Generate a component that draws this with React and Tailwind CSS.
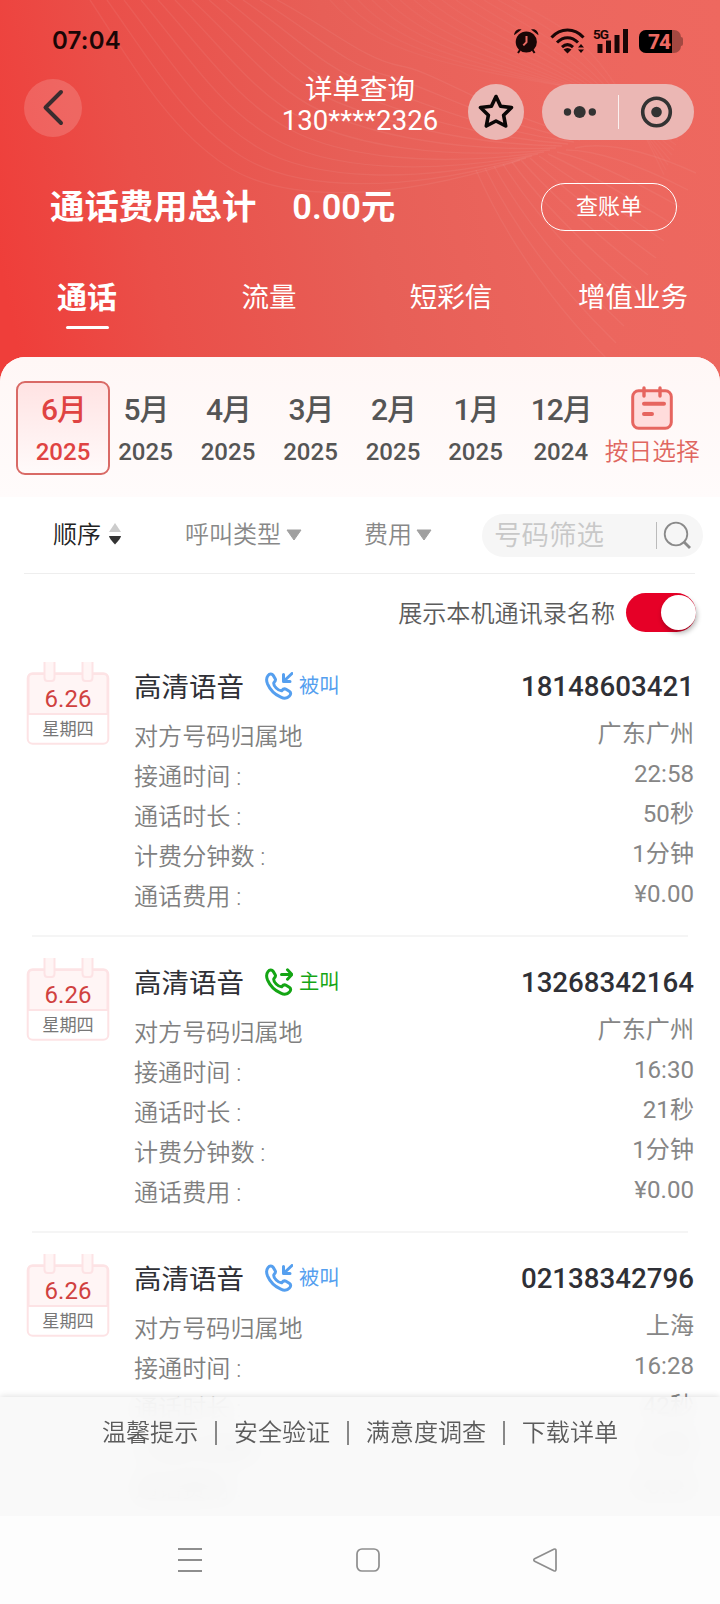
import { useState } from 'react';

const MONTHS = [
  { month: '6月', year: '2025' },
  { month: '5月', year: '2025' },
  { month: '4月', year: '2025' },
  { month: '3月', year: '2025' },
  { month: '2月', year: '2025' },
  { month: '1月', year: '2025' },
  { month: '12月', year: '2024' },
];

const TABS = ['通话', '流量', '短彩信', '增值业务'];

const RECORDS = [
  { id: 1, incoming: true, number: '18148603421', place: '广东广州', time: '22:58', duration: '50秒', minutes: '1分钟', fee: '¥0.00' },
  { id: 2, incoming: false, number: '13268342164', place: '广东广州', time: '16:30', duration: '21秒', minutes: '1分钟', fee: '¥0.00' },
  { id: 3, incoming: true, number: '02138342796', place: '上海', time: '16:28', duration: '42秒', minutes: '1分钟', fee: '¥0.00' },
];

const LINKS = ['温馨提示', '安全验证', '满意度调查', '下载详单'];

function Waves() {
  const range = (n) => Array.from({ length: n }, (_, i) => i);
  return (
    <svg className="absolute inset-0 h-full w-full pointer-events-none" viewBox="0 0 720 382" fill="none" stroke="#fff" strokeWidth="1.4">
      <g strokeOpacity="0.06">
        {range(12).map((i) => (
          <path
            key={i}
            d={`M${90 + i * 17} 0 C${130 + i * 18} ${60 - i * 3} ${165 + i * 18} ${125 - i * 6} ${225 + i * 16} ${165 - i * 9} S${400 + i * 8} ${200 - i * 8} ${520 + i * 6} ${160 - i * 2}`}
          />
        ))}
      </g>
      <g strokeOpacity="0.035">
        {range(14).map((i) => (
          <path key={i} d={`M${330 + i * 14} 0 C${390 + i * 14} ${70 - i * 3} ${500 + i * 8} ${70 - i * 2} ${690 - i * 2} ${110 + i * 5}`} />
        ))}
      </g>
      <g strokeOpacity="0.055">
        {range(12).map((i) => (
          <path key={i} d={`M${476 + i * 9} ${170 - i * 2} Q${520 + i * 9} ${270 - i * 12} ${608 + i * 8} ${360 - i * 17}`} />
        ))}
      </g>
    </svg>
  );
}

function StatusBar() {
  return (
    <div className="flex h-[74px] items-start justify-between pl-[52px] pr-[37px] pt-[27px] text-[#1a0606]">
      <span className="font-['Inter'] text-[24px] leading-[28px] font-semibold tracking-[0.2px]">07:04</span>
      <div className="flex items-start">
        <svg className="h-[28px] w-[26px]" viewBox="0 0 26 28" fill="currentColor">
          <circle cx="13.3" cy="15" r="10.6" />
          <path d="M1.2 8.2C1 4 5 .9 8.6 2.6z M25.4 8.2C25.6 4 21.6 .9 18 2.6z" />
          <path d="M7 23l-2 3M19.6 23l2 3" stroke="currentColor" strokeWidth="2" />
          <path d="M13.5 9v6.2l-3.2 3.2" stroke="#ec6a62" strokeWidth="2" fill="none" />
        </svg>
        <svg className="ml-[11px] h-[28px] w-[36px]" viewBox="0 0 36 28" fill="none" stroke="currentColor" strokeWidth="3">
          <path d="M1.5 10.5C10.5 .5 24.5 .5 33.5 10.5" />
          <path d="M7 15.5C13.5 9 21.5 9 28 15.5" />
          <path d="M12 20.2C15.5 17 19.5 17 23 20.2" />
          <path d="M13.5 22.5Q17.5 19.5 21.5 22.5L17.5 26.5z" fill="currentColor" stroke="none" />
          <path d="M28 20.5L31 17L34 20.5z M28 22.5H34L31 26z" fill="currentColor" stroke="none" />
        </svg>
        <svg className="ml-[7px] h-[28px] w-[36px]" viewBox="0 0 36 28" fill="currentColor">
          <text x="0" y="11.5" fontFamily="Roboto" fontWeight="700" fontSize="13.5" textLength="16">5G</text>
          <rect x="4.5" y="17" width="5" height="9" />
          <rect x="13" y="13.5" width="5" height="12.5" />
          <rect x="21.5" y="8" width="5" height="18" />
          <rect x="30" y="2" width="5" height="24" />
        </svg>
        <div className="relative mt-[3px] ml-[10px] flex items-center">
          <div className="flex h-[23px] w-[42px] overflow-hidden rounded-[7px] bg-[#a34841]">
            <div className="h-full w-[33px] bg-black" />
          </div>
          <div className="h-[9px] w-[2px] rounded-r bg-[#a34841]" />
          <span className="absolute left-[9px] top-0 font-['Roboto'] text-[21px] leading-[24px] font-extrabold tracking-[-1px] text-[#ec6a62]">74</span>
        </div>
      </div>
    </div>
  );
}

function NavBar() {
  return (
    <div className="grid h-[68px] grid-cols-[1fr_auto_1fr] items-start">
      <button className="mt-[5px] ml-6 flex h-[58px] w-[58px] items-center justify-center rounded-full bg-white/16">
        <svg className="h-[58px] w-[58px]" viewBox="0 0 58 58" fill="none" stroke="#3a2d2f" strokeWidth="4" strokeLinecap="round" strokeLinejoin="round">
          <path d="M37 13L21.5 28.5L37 44" />
        </svg>
      </button>
      <div className="flex w-[156px] flex-col items-center pt-[1px] text-white">
        <span className="h-[30px] text-[27.5px] leading-[29px] whitespace-nowrap">详单查询</span>
        <span className="text-[27.5px] leading-[32px] tracking-[0.1px]">130****2326</span>
      </div>
      <div className="mt-[10px] mr-[26px] flex justify-end gap-[18px]">
        <button className="flex h-14 w-14 items-center justify-center rounded-full bg-[#ebb7b4]">
          <svg className="h-14 w-14" viewBox="0 0 56 56" fill="none" stroke="#0a0606" strokeWidth="3.6" strokeLinejoin="round">
            <path d="M28 12.5L32.6 22.2L43.5 23.5L35.6 31.2L37.7 42L28 37L18.3 42L20.4 31.2L12.5 23.5L23.4 22.2Z" />
          </svg>
        </button>
        <div className="flex h-14 w-[152px] items-center rounded-full bg-[#ebb7b4]">
          <svg className="h-14 w-[76px]" viewBox="0 0 76 56" fill="#333">
            <circle cx="25.5" cy="28" r="3.7" />
            <circle cx="37.7" cy="28" r="6" />
            <circle cx="50.3" cy="28" r="3.7" />
          </svg>
          <div className="h-[34px] w-px bg-white/80" />
          <svg className="h-14 w-[75px]" viewBox="0 0 75 56" fill="none">
            <circle cx="37.5" cy="28" r="13.8" stroke="#333" strokeWidth="3.6" />
            <circle cx="37.5" cy="28" r="5.3" fill="#333" />
          </svg>
        </div>
      </div>
    </div>
  );
}

function Header({ tab, onTab }) {
  return (
    <header className="relative h-[382px] shrink-0 bg-[linear-gradient(78deg,#ef3e3a_3%,#ea4f49_22%,#e75f57_50%,#ec665e_76%,#ee685f_100%)]">
      <Waves />
      <div className="relative">
        <StatusBar />
        <NavBar />
        <div className="mt-[40px] flex items-center pl-[50px] pr-[43px] text-white">
          <span className="text-[34.4px] leading-[50px] font-semibold">通话费用总计</span>
          <span className="ml-[36px] text-[34.3px] leading-[50px] font-semibold">0.00元</span>
          <button className="ml-auto flex h-[48px] w-[136px] items-center justify-center rounded-full border border-white pb-[2px] text-[22px]">查账单</button>
        </div>
        <nav className="-mx-1 mt-[41px] grid grid-cols-4 text-white">
          {TABS.map((t, i) => (
            <button key={t} onClick={() => onTab(i)} className="flex h-[58px] flex-col items-center">
              <span className={i === tab ? 'text-[30px] leading-[50px] font-semibold' : 'text-[27.5px] leading-[50px]'}>{t}</span>
              {i === tab && <span className="mt-[3px] h-[3px] w-[43px] shrink-0 rounded-full bg-white" />}
            </button>
          ))}
        </nav>
      </div>
    </header>
  );
}

function MonthStrip({ selected, onSelect }) {
  return (
    <div className="flex h-[140px] bg-linear-to-b from-[#fff7f6] to-[#fffbfb] pt-[24px] pl-4">
      {MONTHS.map((m, i) => (
        <button
          key={m.month}
          onClick={() => onSelect(i)}
          className={
            i === selected
              ? 'mr-[-5.75px] flex h-[94px] w-[94px] flex-col items-center rounded-[9px] border-2 border-[#d96a66] bg-linear-to-b from-[#ffe3e3] to-[#fffafa] pt-[7px] text-[#df4342]'
              : i === MONTHS.length - 1
                ? 'flex h-[94px] w-[88px] flex-col items-center pt-[9px] text-[#555]'
                : 'flex h-[94px] w-[82.5px] flex-col items-center pt-[9px] text-[#555]'
          }
        >
          <span className="pl-[1px] text-[30px] leading-[40px] font-medium tracking-[-1px]">{m.month}</span>
          <span className="mt-[6px] text-[24px] leading-[32px] font-medium">{m.year}</span>
        </button>
      ))}
      <button className="flex w-[95px] flex-col items-center pt-[4px] text-[#e06660]">
        <svg className="h-[46px] w-[44px]" viewBox="0 0 44 46" fill="none" stroke="#e6655f" strokeWidth="3.4" strokeLinecap="round">
          <rect x="2.7" y="5.7" width="38.6" height="37.6" rx="6" fill="#ffdcdc" strokeWidth="3" />
          <path d="M14 3V11M30 3V11" />
          <path d="M14 18.8H34M14 29H22" strokeWidth="4" />
        </svg>
        <span className="mt-[5px] text-[23.7px] leading-[32px] font-[350] whitespace-nowrap">按日选择</span>
      </button>
    </div>
  );
}

function Caret() {
  return (
    <svg className="h-[12px] w-[16px]" viewBox="0 0 16 12" fill="#a0a0a0" stroke="#a0a0a0" strokeLinejoin="round">
      <path d="M1 1H15L8 11Z" />
    </svg>
  );
}

function FilterBar() {
  return (
    <div className="mr-[25px] ml-6 flex h-[77px] items-center border-b border-[#eee] text-[24px] leading-[32px] font-[350] text-[#888]">
      <div className="flex w-[131px] items-center gap-[8px] pl-[29px] text-[#222]">
        <span>顺序</span>
        <svg className="-mt-[2px] h-[22px] w-[12px]" viewBox="0 0 12 22">
          <path d="M6 0L12 9H0Z" fill="#ccc" />
          <path d="M0 13H12Q12 15 6 21.5Q0 15 0 13Z" fill="#333" />
        </svg>
      </div>
      <div className="flex w-[179px] items-center gap-[5px] pl-[30px]">
        <span>呼叫类型</span>
        <Caret />
      </div>
      <div className="flex w-[148px] items-center gap-[4px] pl-[30px]">
        <span>费用</span>
        <Caret />
      </div>
      <div className="-mr-2 flex h-[43px] w-[221px] shrink-0 items-center rounded-full bg-[#f6f6f6] pl-[12px]">
        <span className="w-[162px] pt-[2px] text-[27.5px] leading-[40px] text-[#c8c8c8]">号码筛选</span>
        <span className="h-[27px] w-px bg-[#bbb]" />
        <svg className="ml-[6px] h-[28px] w-[28px]" viewBox="0 0 28 28" fill="none" stroke="#8a8a8a">
          <circle cx="13" cy="13" r="11.3" strokeWidth="1.8" />
          <path d="M20.5 20.5L27 27" strokeWidth="2.8" />
        </svg>
      </div>
    </div>
  );
}

function ContactToggle({ on, onToggle }) {
  return (
    <div className="flex h-[78px] items-center justify-end gap-[11px] pr-[24px] pb-[1px]">
      <span className="pt-[2px] text-[24.1px] leading-[32px] font-[350] text-[#5c5c5c]">展示本机通讯录名称</span>
      <button
        onClick={onToggle}
        className={on ? 'flex h-[39px] w-[70px] items-center justify-end rounded-full bg-[#e60027]' : 'flex h-[39px] w-[70px] items-center rounded-full bg-gray-300 pl-px'}
      >
        <span className="h-[35px] w-[35px] rounded-full bg-white shadow-[1px_3px_5px_rgba(0,0,0,0.3)]" />
      </button>
    </div>
  );
}

function DateBadge() {
  return (
    <div className="relative mt-[1px] h-[83px] w-[84px]">
      <svg className="absolute inset-0 h-full w-full" viewBox="0 0 84 83" fill="none" stroke="#fde3e5" strokeWidth="2">
        <rect x="1.7" y="11.2" width="80.6" height="70.5" rx="5" fill="#fff" />
        <path d="M2.5 52V16Q2.5 12 6.5 12H77.5Q81.5 12 81.5 16V52Z" fill="#fff5f5" />
        <path d="M18.5 0V15.5Q18.5 19 21.5 19H25.5Q28.5 19 28.5 15.5V0" fill="#fff5f5" />
        <path d="M56.5 0V15.5Q56.5 19 59.5 19H63.5Q66.5 19 66.5 15.5V0" fill="#fff5f5" />
      </svg>
      <div className="relative flex flex-col items-center pt-[22px]">
        <span className="text-[24px] leading-[30px] text-[#d0413f]">6.26</span>
        <span className="mt-[2px] text-[17.2px] leading-[26px] text-[#777]">星期四</span>
      </div>
    </div>
  );
}

function CallIcon({ incoming }) {
  return (
    <svg className="h-[28px] w-[28px]" viewBox="0 0 28 28" fill="none" stroke="currentColor" strokeWidth="3" strokeLinecap="round" strokeLinejoin="round">
      <path
        strokeWidth="3"
        d="M3 3.600C4.5 1.700 7 1.500 8.200 3.400L10.200 6.700C11.200 8.400 10 9.600 8.800 10.800C8.300 14 13 19 16.700 18.700C17.900 17.200 19.400 16.300 21 17.300L24.300 19.300C26.200 20.600 26 22.600 24.500 24C22.500 26.200 19.500 27 15.800 25.200C9.700 22.300 4.800 17.200 2.500 11.800C1.200 8.500 1.400 5.600 3 3.600Z"
      />
      {incoming ? <path d="M27 1.5L19 9M18.5 2.5V9.5H25" /> : <path d="M16.5 6.5H26.5M22.5 1.8L27 6.5L22.5 11.2" />}
    </svg>
  );
}

function Row({ label, value }) {
  return (
    <div className="flex h-[40px] items-start justify-between text-[24.1px] leading-[40px] font-[350] text-[#808080]">
      <span>{label}</span>
      <span className="-mt-[3px] font-normal text-[#868686]">{value}</span>
    </div>
  );
}

function Record({ record }) {
  return (
    <article className="shrink-0">
      <div className="flex h-[285px] items-start pl-[26px] pr-[26px] pt-[11px]">
        <DateBadge />
        <div className="ml-[24px] flex-1 pt-[1px]">
          <div className="flex h-[55px] items-start">
            <span className="pt-[1px] text-[27.5px] leading-[50px] text-[#2f3036]">高清语音</span>
            <span className={record.incoming ? 'mt-[10px] ml-[21px] flex items-center text-[#559fef]' : 'mt-[10px] ml-[21px] flex items-center text-[#14a514]'}>
              <CallIcon incoming={record.incoming} />
              <span className="ml-[6px] text-[20.3px] leading-[28px]">{record.incoming ? '被叫' : '主叫'}</span>
            </span>
            <span className="ml-auto text-[27.7px] leading-[50px] font-medium text-[#2f3036]">{record.number}</span>
          </div>
          <Row label="对方号码归属地" value={record.place} />
          <Row label="接通时间 :" value={record.time} />
          <Row label="通话时长 :" value={record.duration} />
          <Row label="计费分钟数 :" value={record.minutes} />
          <Row label="通话费用 :" value={record.fee} />
        </div>
      </div>
      <div className="mx-8 h-[2px] bg-[#f5f5f5]" />
    </article>
  );
}

function FooterLinks() {
  return (
    <div className="absolute inset-x-0 bottom-[88px] flex h-[119px] items-start justify-center bg-[#f8f8f8]/90 pt-[19px] text-[24.1px] leading-[34px] font-[350] text-[#5c5c5c] shadow-[0_-1px_6px_rgba(0,0,0,0.12)] backdrop-blur-md">
      {LINKS.map((link, i) => (
        <div key={link} className="flex items-center">
          {i > 0 && <span className="mx-[17px] h-[24px] w-[1.5px] bg-[#888]" />}
          <span>{link}</span>
        </div>
      ))}
    </div>
  );
}

function SystemNav() {
  return (
    <div className="absolute inset-x-0 bottom-0 flex h-[88px] items-center bg-[#fdfdfd] pl-[177px]">
      <svg className="h-[26px] w-[26px]" viewBox="0 0 26 26" stroke="#8e8e8e" strokeWidth="2">
        <path d="M1 2H25M1 13H25M1 24H25" />
      </svg>
      <svg className="ml-[152px] h-[26px] w-[26px]" viewBox="0 0 26 26" fill="none" stroke="#8e8e8e" strokeWidth="1.7">
        <rect x="2" y="2" width="22" height="22" rx="5" />
      </svg>
      <svg className="ml-[151px] h-[26px] w-[26px]" viewBox="0 0 26 26" fill="none" stroke="#8e8e8e" strokeWidth="1.7" strokeLinejoin="round">
        <path d="M2.6 11.7L21.8 2.2Q24 1.5 24 3.7V22.3Q24 24.5 21.8 23.8L2.6 14.3Q1 13 2.6 11.7Z" />
      </svg>
    </div>
  );
}

export default function App() {
  const [tab, setTab] = useState(0);
  const [month, setMonth] = useState(0);
  const [showNames, setShowNames] = useState(true);

  return (
    <div className="relative flex h-[1604px] w-[720px] flex-col overflow-hidden bg-white font-['Roboto','Noto_Sans_CJK_SC',sans-serif]">
      <Header tab={tab} onTab={setTab} />
      <main className="relative -mt-[25px] flex flex-col overflow-hidden rounded-t-[25px] bg-white">
        <MonthStrip selected={month} onSelect={setMonth} />
        <FilterBar />
        <ContactToggle on={showNames} onToggle={() => setShowNames(!showNames)} />
        <div className="-mt-[2px] flex flex-col gap-[9px]">
          {RECORDS.map((r) => (
            <Record key={r.id} record={r} />
          ))}
        </div>
      </main>
      <FooterLinks />
      <SystemNav />
    </div>
  );
}
